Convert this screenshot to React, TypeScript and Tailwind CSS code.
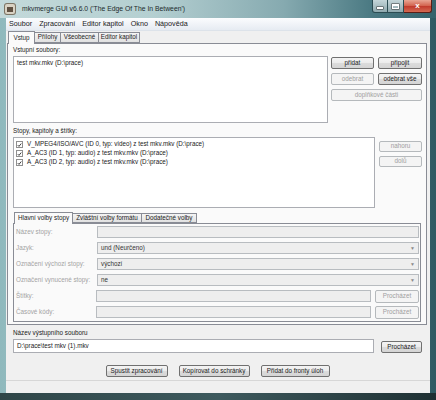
import type { ReactNode } from "react";

const Btn = ({
  children,
  className = "",
  disabled = false,
}: {
  children: ReactNode;
  className?: string;
  disabled?: boolean;
}) => (
  <div
    className={`flex items-center justify-center rounded-[2px] border text-[6.3px] leading-none ${
      disabled
        ? "border-[#b5b9bc] bg-[#f4f4f4] text-[#a0a0a0]"
        : "border-[#707070] bg-[linear-gradient(#f4f4f4_0%,#ebebeb_50%,#dcdcdc_51%,#d4d4d4_100%)] text-[#1a1a1a]"
    } ${className}`}
  >
    {children}
  </div>
);

const Field = ({
  value,
  combo = false,
  className = "",
}: {
  value?: string;
  combo?: boolean;
  className?: string;
}) => (
  <div
    className={`flex h-[12px] items-center border border-[#b8bcc0] bg-[#eeeeee] pl-[3px] pr-[3px] text-[6.3px] text-[#333] ${className}`}
  >
    <span className="flex-1">{value}</span>
    {combo && <span className="text-[5px] text-[#8a8a8a]">▼</span>}
  </div>
);

const Check = () => (
  <span className="flex h-[7px] w-[7px] items-center justify-center border border-[#8f8f8f] bg-white">
    <svg viewBox="0 0 8 8" className="h-[6px] w-[6px]">
      <path d="M1.2 4.2 L3.2 6.2 L6.8 1.6" fill="none" stroke="#222" strokeWidth="1.4" />
    </svg>
  </span>
);

const tracks = [
  "V_MPEG4/ISO/AVC (ID 0, typ: video) z test mkv.mkv (D:\\prace)",
  "A_AC3 (ID 1, typ: audio) z test mkv.mkv (D:\\prace)",
  "A_AC3 (ID 2, typ: audio) z test mkv.mkv (D:\\prace)",
];

const options: { label: string; value?: string; combo?: boolean; browse?: boolean }[] = [
  { label: "Název stopy:" },
  { label: "Jazyk:", value: "und (Neurčeno)", combo: true },
  { label: "Označení výchozí stopy:", value: "výchozí", combo: true },
  { label: "Označení vynucené stopy:", value: "ne", combo: true },
  { label: "Štítky:", browse: true },
  { label: "Časové kódy:", browse: true },
];

export default function App() {
  return (
    <div className="flex h-[400px] w-[436px] flex-col overflow-hidden bg-[linear-gradient(90deg,#8fb9bd_0%,#a9c8cb_25%,#88aeb3_55%,#4f7f88_80%,#2f5a62_100%)] font-['Liberation_Sans',Arial,sans-serif]">
      {/* title bar */}
      <div className="flex h-[18px] shrink-0 items-start bg-[linear-gradient(90deg,#c3d9da_0%,#b4cfd1_35%,#86aab0_65%,#4b7a83_85%,#35626b_100%)]">
        <div className="ml-[5px] mt-[4px] flex h-[10px] w-[10px] items-center justify-center rounded-[2px] bg-[#d9d2c3] shadow-[0_0_0_1px_#7d7565]">
          <div className="h-[5px] w-[6px] bg-[#5f5142]" />
        </div>
        <span className="ml-[7px] mt-[4px] text-[6.8px] leading-[10px] text-[#1c2a2c]">
          mkvmerge GUI v6.6.0 ('The Edge Of The In Between')
        </span>
        <div className="ml-auto mr-[4px] flex h-[13px]">
          <div className="flex w-[16px] items-center justify-center rounded-bl-[3px] border border-t-0 border-[#2b4c52] bg-[linear-gradient(#c5d6d9,#8fa9ae)]">
            <div className="mt-[3px] h-[2px] w-[6px] bg-white shadow-[0_0_0_0.5px_#333]" />
          </div>
          <div className="flex w-[16px] items-center justify-center border border-l-0 border-t-0 border-[#2b4c52] bg-[linear-gradient(#c5d6d9,#8fa9ae)]">
            <div className="h-[5px] w-[7px] border border-t-2 border-white shadow-[0_0_0_0.5px_#333]" />
          </div>
          <div className="flex w-[28px] items-center justify-center rounded-br-[3px] border border-l-0 border-t-0 border-[#5a1e16] bg-[linear-gradient(#e8a593_0%,#d2614c_50%,#c0392b_51%,#d46a52_100%)] text-[8px] font-bold leading-none text-white">
            x
          </div>
        </div>
      </div>

      {/* client area */}
      <div className="mx-[6px] flex h-[375px] shrink-0 flex-col bg-[#f0f0f0] text-[#1a1a1a]">
        {/* menu */}
        <div className="flex h-[13px] shrink-0 items-center gap-[7px] border-b border-[#dde3ea] bg-[linear-gradient(#fbfcfe,#e6ebf2)] pl-[3px] text-[7.2px] leading-none">
          <span>Soubor</span>
          <span>Zpracování</span>
          <span>Editor kapitol</span>
          <span>Okno</span>
          <span>Nápověda</span>
        </div>

        {/* tabs */}
        <div className="flex h-[12px] shrink-0 items-end pl-[2px] text-[6.3px] leading-none">
          <div className="z-10 -mb-px flex h-[13px] w-[27px] items-center justify-center border border-b-0 border-[#898c95] bg-[#fafafa]">
            Vstup
          </div>
          <div className="flex h-[11px] w-[26px] items-center justify-center border border-l-0 border-[#898c95] bg-[linear-gradient(#f4f4f4,#e1e1e1)]">
            Přílohy
          </div>
          <div className="flex h-[11px] w-[38px] items-center justify-center border border-l-0 border-[#898c95] bg-[linear-gradient(#f4f4f4,#e1e1e1)]">
            Všeobecné
          </div>
          <div className="flex h-[11px] w-[41px] items-center justify-center border border-l-0 border-[#898c95] bg-[linear-gradient(#f4f4f4,#e1e1e1)]">
            Editor kapitol
          </div>
        </div>

        {/* main panel */}
        <div className="ml-[1px] flex h-[282px] w-[420px] shrink-0 flex-col border border-[#898c95] bg-[#fafafa] pl-[5px] pr-[4px] text-[6.3px] leading-none">
          <div className="flex h-[12px] items-center">Vstupní soubory:</div>
          <div className="flex">
            <div className="h-[67px] w-[315px] border border-[#abadb3] bg-white pl-[3px] pt-[3px]">
              test mkv.mkv (D:\prace)
            </div>
            <div className="ml-[3px] flex flex-1 flex-col gap-[4px] pt-[1px]">
              <div className="flex gap-[4px]">
                <Btn className="h-[12px] w-[43px]">přidat</Btn>
                <Btn className="h-[12px] w-[44px]">připojit</Btn>
              </div>
              <div className="flex gap-[4px]">
                <Btn disabled className="h-[12px] w-[43px]">odebrat</Btn>
                <Btn className="h-[12px] w-[44px]">odebrat vše</Btn>
              </div>
              <Btn disabled className="h-[12px] w-[91px]">doplňkové části</Btn>
            </div>
          </div>

          <div className="mt-[2px] flex h-[12px] items-center">Stopy, kapitoly a štítky:</div>
          <div className="flex">
            <div className="flex h-[71px] w-[362px] flex-col gap-[2px] border border-[#abadb3] bg-white pl-[2px] pt-[3px]">
              {tracks.map((t) => (
                <div key={t} className="flex h-[7px] items-center gap-[4px]">
                  <Check />
                  <span>{t}</span>
                </div>
              ))}
            </div>
            <div className="ml-[4px] flex flex-col gap-[4px] pt-[4px]">
              <Btn disabled className="h-[11px] w-[43px]">nahoru</Btn>
              <Btn disabled className="h-[11px] w-[43px]">dolů</Btn>
            </div>
          </div>

          {/* inner tabs */}
          <div className="mt-[4px] flex h-[11px] items-end pl-[1px]">
            <div className="z-10 -mb-px flex h-[12px] w-[59px] items-center justify-center border border-b-0 border-[#898c95] bg-[#fafafa]">
              Hlavní volby stopy
            </div>
            <div className="flex h-[10px] w-[69px] items-center justify-center border border-l-0 border-[#898c95] bg-[linear-gradient(#f4f4f4,#e1e1e1)]">
              Zvláštní volby formátu
            </div>
            <div className="flex h-[10px] w-[55px] items-center justify-center border border-l-0 border-[#898c95] bg-[linear-gradient(#f4f4f4,#e1e1e1)]">
              Dodatečné volby
            </div>
          </div>
          <div className="flex h-[99px] w-[408px] flex-col gap-[4px] border border-[#898c95] bg-[#fafafa] pl-[2px] pr-[1px] pt-[2px]">
            {options.map((o) => (
              <div key={o.label} className="flex h-[12px] items-center">
                <span className="w-[81px] text-[#a3a3a3]">{o.label}</span>
                {o.browse ? (
                  <div className="flex flex-1 gap-[4px]">
                    <Field className="w-[275px]" />
                    <Btn disabled className="h-[13px] w-[44px]">Procházet</Btn>
                  </div>
                ) : (
                  <Field className="flex-1" value={o.value} combo={o.combo} />
                )}
              </div>
            ))}
          </div>
        </div>

        {/* output */}
        <div className="ml-[7px] mt-[2px] flex h-[12px] shrink-0 items-center text-[6.3px] leading-none">
          Název výstupního souboru
        </div>
        <div className="ml-[7px] flex shrink-0 items-center text-[6.3px] leading-none">
          <div className="flex h-[14px] w-[361px] items-center border border-[#abadb3] bg-white pl-[3px]">
            D:\prace\test mkv (1).mkv
          </div>
          <Btn className="ml-[7px] mt-[2px] h-[12px] w-[41px]">Procházet</Btn>
        </div>

        <div className="mt-[12px] flex shrink-0 justify-center gap-[11px] pr-[1px]">
          <Btn className="h-[12px] w-[62px]">Spustit zpracování</Btn>
          <Btn className="h-[12px] w-[71px]">Kopírovat do schránky</Btn>
          <Btn className="h-[12px] w-[69px]">Přidat do fronty úloh</Btn>
        </div>

        {/* status bar */}
        <div className="mt-auto h-[13px] shrink-0 border-t border-[#d7d7d7] bg-[#f0f0f0]" />
      </div>

      {/* bottom frame */}
      <div className="flex-1 bg-[linear-gradient(90deg,#2f4648_0%,#3e5a5e_50%,#1f3033_100%)]" />
    </div>
  );
}
